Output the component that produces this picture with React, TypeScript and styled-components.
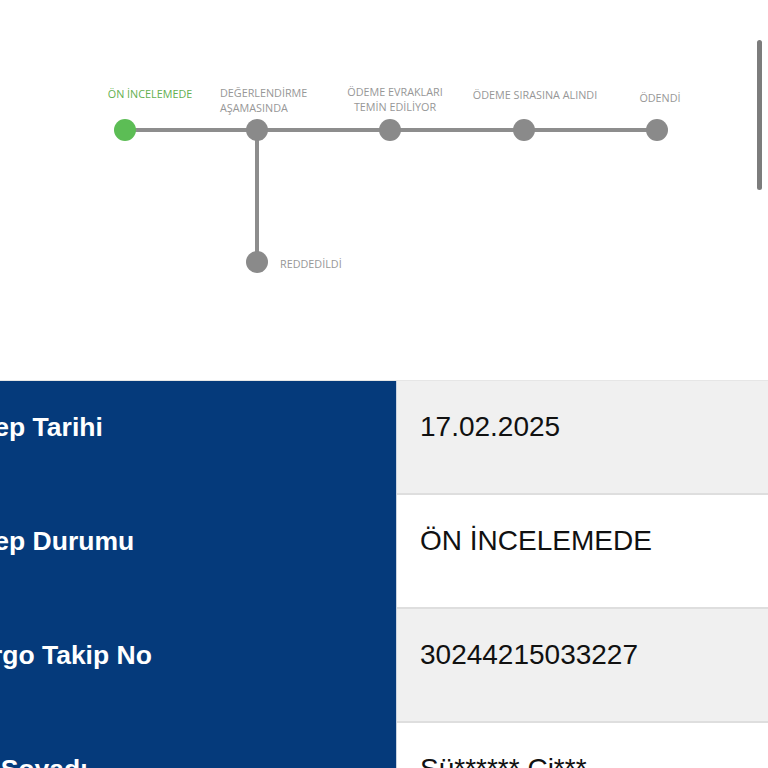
import React from "react";
import styled, { createGlobalStyle } from "styled-components";

const Global = createGlobalStyle`
  html, body { margin: 0; padding: 0; background: #ffffff; }
  body { width: 768px; height: 768px; overflow: hidden; font-family: "Liberation Sans", Arial, sans-serif; }
`;

const Page = styled.div`
  position: relative;
  width: 768px;
  height: 768px;
  overflow: hidden;
  background: #ffffff;
`;

const TimelineSection = styled.section`
  position: relative;
  height: 380px;
`;

const Canvas = styled.svg`
  position: absolute;
  inset: 0;
`;

const StepLabel = styled.div<{ $x: number; $y: number; $align: "left" | "center"; $active?: boolean }>`
  position: absolute;
  left: ${(p) => p.$x}px;
  top: ${(p) => p.$y}px;
  transform: ${(p) => (p.$align === "center" ? "translateX(-50%)" : "none")};
  text-align: ${(p) => p.$align};
  font-family: "Open Sans", "Noto Sans", sans-serif;
  font-size: 10.8px;
  line-height: 15px;
  white-space: nowrap;
  color: ${(p) => (p.$active ? "#63b04f" : "#979797")};
`;

const Scrollbar = styled.div`
  position: absolute;
  left: 757px;
  top: 40px;
  width: 5px;
  height: 150px;
  border-radius: 3px;
  background: #7c7c7c;
`;

const Table = styled.div`
  display: grid;
  grid-template-columns: 439px 1fr;
  grid-auto-rows: 114px;
  margin-left: -42px;
  border-top: 1px solid #e6e6e6;
`;

const LabelCell = styled.div`
  background: #053a7b;
  border-right: 1px solid #c9d3e0;
  color: #ffffff;
  font-weight: 700;
  font-size: 26.5px;
  line-height: 30px;
  padding-top: 31px;
  white-space: nowrap;
  overflow: hidden;
`;

const ValueCell = styled.div<{ $shaded: boolean }>`
  background: ${(p) => (p.$shaded ? "#f0f0f0" : "#ffffff")};
  border-bottom: 2px solid #dedede;
  color: #111111;
  font-size: 28px;
  line-height: 32px;
  padding: 30px 0 0 23px;
  white-space: nowrap;
`;

const rows = [
  { label: "Talep Tarihi", value: "17.02.2025" },
  { label: "Talep Durumu", value: "ÖN İNCELEMEDE" },
  { label: "Kargo Takip No", value: "30244215033227" },
  { label: "Ad Soyadı", value: "Sü****** Ci***" },
];

const nodes = [
  { x: 125, y: 130, active: true },
  { x: 257, y: 130 },
  { x: 390, y: 130 },
  { x: 524, y: 130 },
  { x: 657, y: 130 },
  { x: 257, y: 262 },
];

export default function App() {
  return (
    <Page>
      <Global />
      <TimelineSection>
        <Canvas width={768} height={380} viewBox="0 0 768 380">
          <line x1={125} y1={130} x2={657} y2={130} stroke="#8d8d8d" strokeWidth={4} />
          <line x1={257} y1={130} x2={257} y2={262} stroke="#8d8d8d" strokeWidth={4} />
          {nodes.map((n, i) => (
            <circle key={i} cx={n.x} cy={n.y} r={11} fill={n.active ? "#5cbd55" : "#8a8a8a"} />
          ))}
        </Canvas>
        <StepLabel $x={150} $y={86} $align="center" $active>
          ÖN İNCELEMEDE
        </StepLabel>
        <StepLabel $x={220} $y={85} $align="left">
          DEĞERLENDİRME
          <br />
          AŞAMASINDA
        </StepLabel>
        <StepLabel $x={395} $y={84} $align="center">
          ÖDEME EVRAKLARI
          <br />
          TEMİN EDİLİYOR
        </StepLabel>
        <StepLabel $x={535} $y={87} $align="center">
          ÖDEME SIRASINA ALINDI
        </StepLabel>
        <StepLabel $x={660} $y={90} $align="center">
          ÖDENDİ
        </StepLabel>
        <StepLabel $x={280} $y={256} $align="left">
          REDDEDİLDİ
        </StepLabel>
        <Scrollbar />
      </TimelineSection>
      <Table>
        {rows.map((r, i) => (
          <React.Fragment key={r.label}>
            <LabelCell>{r.label}</LabelCell>
            <ValueCell $shaded={i % 2 === 0}>{r.value}</ValueCell>
          </React.Fragment>
        ))}
      </Table>
    </Page>
  );
}
